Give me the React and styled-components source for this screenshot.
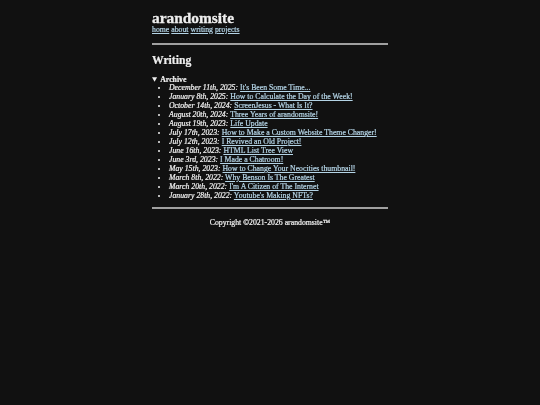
import React from "react";
import styled, { createGlobalStyle } from "styled-components";

const Global = createGlobalStyle`
  html, body { margin: 0; padding: 0; background: #111111; }
  body {
    color: #eeeeee;
    font-family: "Liberation Serif", "Times New Roman", serif;
    font-size: 7.78px;
    line-height: 8.95px;
    min-height: 405px;
    -webkit-text-stroke: 0.22px currentColor;
  }
  a { color: #b4d4e6; }
`;

const Page = styled.div`
  width: 236px;
  margin: 0 auto;
  padding-top: 8.5px;
  will-change: transform;
`;

const Header = styled.header`
  display: flex;
  flex-direction: column;
`;

const Title = styled.h1`
  font-size: 15.4px;
  line-height: 17px;
  margin: 0;
  -webkit-text-stroke: 0.3px currentColor;
`;

const Nav = styled.nav`
  display: flex;
  gap: 2px;
`;

const Rule = styled.hr`
  border: none;
  height: 2px;
  background: #a0a0a0;
  margin: ${(p) => p.$top} 0 0;
`;

const Heading = styled.h2`
  font-size: 11.66px;
  line-height: 13.4px;
  margin: 8.8px 0 8.4px;
`;

const Details = styled.details`
  summary {
    font-weight: bold;
    cursor: pointer;
  }
`;

const List = styled.ul`
  margin: -0.4px 0 0;
  padding-left: 17px;
  list-style: disc;
`;

const Item = styled.li``;

const PostDate = styled.em``;

const Footer = styled.footer`
  text-align: center;
  margin-top: 9.8px;
`;

const posts = [
  ["December 11th, 2025", "It's Been Some Time..."],
  ["January 8th, 2025", "How to Calculate the Day of the Week!"],
  ["October 14th, 2024", "ScreenJesus - What Is It?"],
  ["August 20th, 2024", "Three Years of arandomsite!"],
  ["August 19th, 2023", "Life Update"],
  ["July 17th, 2023", "How to Make a Custom Website Theme Changer!"],
  ["July 12th, 2023", "I Revived an Old Project!"],
  ["June 16th, 2023", "HTML List Tree View"],
  ["June 3rd, 2023", "I Made a Chatroom!"],
  ["May 15th, 2023", "How to Change Your Neocities thumbnail!"],
  ["March 8th, 2022", "Why Benson Is The Greatest"],
  ["March 20th, 2022", "I'm A Citizen of The Internet"],
  ["January 28th, 2022", "Youtube's Making NFTs?"],
];

export default function App() {
  return (
    <>
      <Global />
      <Page>
        <Header>
          <Title>arandomsite</Title>
          <Nav>
            <a href="#">home</a>
            <a href="#">about</a>
            <a href="#">writing</a>
            <a href="#">projects</a>
          </Nav>
        </Header>
        <Rule $top="8.8px" />
        <Heading>Writing</Heading>
        <Details open>
          <summary>Archive</summary>
          <List>
            {posts.map(([d, t]) => (
              <Item key={d + t}>
                <PostDate>{d}:</PostDate> <a href="#">{t}</a>
              </Item>
            ))}
          </List>
        </Details>
        <Rule $top="6.6px" />
        <Footer>Copyright ©2021-2026 arandomsite™</Footer>
      </Page>
    </>
  );
}
